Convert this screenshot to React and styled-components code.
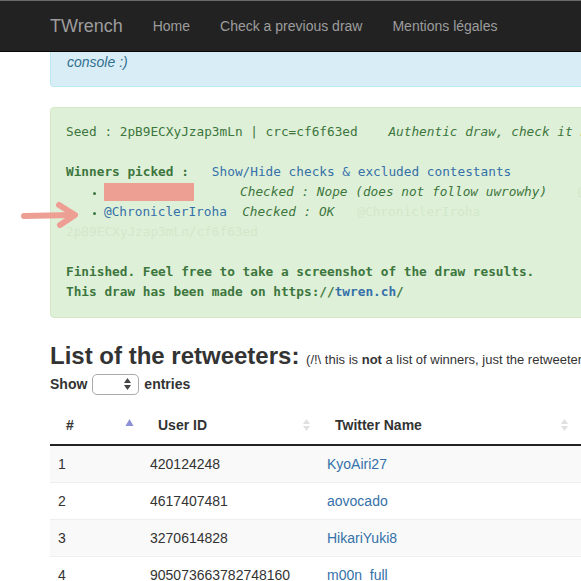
import styled, { createGlobalStyle } from "styled-components";

const GlobalStyle = createGlobalStyle`
  html, body {
    margin: 0;
    padding: 0;
    overflow: hidden;
    background: #fff;
  }
  body {
    font-family: "Liberation Sans", Arial, sans-serif;
    font-size: 14px;
    line-height: 20px;
    color: #333;
  }
`;

const colors = {
  navBg: "#222",
  navText: "#9d9d9d",
  infoBg: "#d9edf7",
  infoBorder: "#bce8f1",
  infoText: "#31708f",
  successBg: "#dff0d8",
  successBorder: "#d6e9c6",
  successText: "#3c763d",
  faint: "#d2e8ca",
  link: "#3571a8",
  marker: "#ee9f94",
};

const Page = styled.div`
  width: 1200px;
`;

const Navbar = styled.nav`
  background: ${colors.navBg};
  border-top: 1px solid #6a6a6a;
  border-bottom: 1px solid #080808;
  height: 50px;
`;

const NavInner = styled.div`
  display: flex;
  align-items: center;
  height: 100%;
  padding-left: 50px;
`;

const Brand = styled.a`
  font-size: 18px;
  color: ${colors.navText};
  padding-right: 15px;
  line-height: 20px;
`;

const NavLink = styled.a`
  font-size: 14px;
  color: ${colors.navText};
  padding: 0 15px;
  line-height: 20px;
`;

const Container = styled.div`
  width: 1140px;
  margin-left: 50px;
`;

const InfoAlert = styled.div`
  background: ${colors.infoBg};
  border: 1px solid ${colors.infoBorder};
  border-top: none;
  border-radius: 0 0 4px 4px;
  color: ${colors.infoText};
  font-style: italic;
  padding: 0 16px 14px;
  line-height: 20px;
`;

const SuccessAlert = styled.div`
  position: relative;
  margin-top: 20px;
  background: ${colors.successBg};
  border: 1px solid ${colors.successBorder};
  border-radius: 4px;
  color: ${colors.successText};
  padding: 14px 15px 15px;
  font-family: "DejaVu Sans Mono", Menlo, monospace;
  font-size: 12.75px;
  line-height: 20px;
  white-space: pre;
`;

const Line = styled.div`
  height: 20px;
  font-weight: ${(p) => (p.$bold ? "bold" : "normal")};
`;

const Italic = styled.span`
  font-style: italic;
`;

const Link = styled.a`
  color: ${colors.link};
  font-weight: ${(p) => (p.$bold ? "bold" : "normal")};
`;

const Faint = styled.span`
  color: ${colors.faint};
`;

const WinnerList = styled.ul`
  margin: 0;
  padding: 0 0 0 38px;
  list-style: none;
`;

const Winner = styled.li`
  position: relative;
  height: 20px;

  &::before {
    content: "";
    position: absolute;
    left: -11px;
    top: 10px;
    width: 3px;
    height: 3px;
    border-radius: 50%;
    background: ${colors.successText};
  }
`;

const Redacted = styled.span`
  display: inline-block;
  vertical-align: -5px;
  width: 90px;
  height: 18px;
  background: ${colors.marker};
`;

const Arrow = styled.svg`
  position: absolute;
  left: -30px;
  top: 87px;
`;

const Heading = styled.h2`
  margin: 23px 0 0;
  height: 30px;
  font-size: 24px;
  font-weight: bold;
  line-height: 30px;
  color: #333;
  white-space: nowrap;

  small {
    font-size: 13px;
    line-height: 20px;
    font-weight: normal;
    color: #333;
  }
`;

const LengthRow = styled.div`
  display: flex;
  align-items: center;
  gap: 5px;
  margin-top: 2px;
  height: 22px;
  font-weight: bold;
`;

const Select = styled.span`
  display: inline-flex;
  align-items: center;
  justify-content: flex-end;
  box-sizing: border-box;
  width: 47px;
  height: 21px;
  border: 1px solid #aaa;
  border-radius: 5px;
  padding-right: 6px;
  background: #fff;
`;

const Table = styled.table`
  margin-top: 11px;
  width: 1140px;
  border-collapse: collapse;
`;

const Th = styled.th`
  width: ${(p) => p.$w}px;
  text-align: left;
  padding: 8px 8px 8px 16px;
  border-bottom: 2px solid #222;
  font-weight: bold;
  height: 22px;
`;

const ThInner = styled.div`
  display: flex;
  align-items: center;
  justify-content: space-between;
`;

const Row = styled.tr`
  background: ${(p) => (p.$striped ? "#f9f9f9" : "#fff")};
`;

const Td = styled.td`
  padding: 8px;
  border-top: 1px solid #eee;
  line-height: 20px;
`;

const SortIcon = ({ state }) =>
  state === "asc" ? (
    <svg width="9" height="14" viewBox="0 0 9 14">
      <path d="M4.5 1 L8.5 8 L0.5 8 Z" fill="#8d8fd6" />
    </svg>
  ) : (
    <svg width="9" height="14" viewBox="0 0 9 14">
      <path d="M4.5 1 L8 6 L1 6 Z" fill={state === "select" ? "#444" : "#e0e0e0"} />
      <path d="M4.5 13 L8 8 L1 8 Z" fill={state === "select" ? "#444" : "#e0e0e0"} />
    </svg>
  );

const rows = [
  ["1", "420124248", "KyoAiri27"],
  ["2", "4617407481", "aovocado"],
  ["3", "3270614828", "HikariYuki8"],
  ["4", "905073663782748160", "m00n_full"],
];

export default function App() {
  return (
    <Page>
      <GlobalStyle />
      <Navbar>
        <NavInner>
          <Brand>TWrench</Brand>
          <NavLink>Home</NavLink>
          <NavLink>Check a previous draw</NavLink>
          <NavLink>Mentions légales</NavLink>
        </NavInner>
      </Navbar>
      <Container>
        <InfoAlert>console :)</InfoAlert>

        <SuccessAlert>
          <Arrow width="70" height="40" viewBox="0 0 70 40">
            <path
              d="M3 21 L52 20"
              stroke={colors.marker}
              strokeWidth="6"
              strokeLinecap="round"
              fill="none"
            />
            <path
              d="M38 10 L54 20 L39 30"
              stroke={colors.marker}
              strokeWidth="6"
              strokeLinecap="round"
              strokeLinejoin="round"
              fill="none"
            />
          </Arrow>
          <Line>
            {"Seed : 2pB9ECXyJzap3mLn | crc=cf6f63ed    "}
            <Italic>Authentic draw, check it here : https://twren.ch/check</Italic>
          </Line>
          <Line />
          <Line $bold>
            {"Winners picked :   "}
            <Link>Show/Hide checks &amp; excluded contestants</Link>
          </Line>
          <WinnerList>
            <Winner>
              <Redacted />
              {"      "}
              <Italic>Checked : Nope (does not follow uwrowhy)</Italic>
              {"    "}
              <Faint>@xxxxxxxxxx</Faint>
            </Winner>
            <Winner>
              <Link>@ChroniclerIroha</Link>
              {"  "}
              <Italic>Checked : OK</Italic>
              {"   "}
              <Faint>@ChroniclerIroha</Faint>
            </Winner>
          </WinnerList>
          <Line>
            <Faint>2pB9ECXyJzap3mLn/cf6f63ed</Faint>
          </Line>
          <Line />
          <Line $bold>Finished. Feel free to take a screenshot of the draw results.</Line>
          <Line $bold>
            This draw has been made on https://<Link $bold>twren.ch</Link>/
          </Line>
        </SuccessAlert>

        <Heading>
          List of the retweeters: <small>(/!\ this is <b>not</b> a list of winners, just the retweeters of the tweet)</small>
        </Heading>
        <LengthRow>
          Show
          <Select>
            <SortIcon state="select" />
          </Select>
          entries
        </LengthRow>

        <Table>
          <thead>
            <tr>
              <Th $w={68}>
                <ThInner>
                  #
                  <SortIcon state="asc" />
                </ThInner>
              </Th>
              <Th $w={153}>
                <ThInner>
                  User ID
                  <SortIcon />
                </ThInner>
              </Th>
              <Th $w={234}>
                <ThInner>
                  Twitter Name
                  <SortIcon />
                </ThInner>
              </Th>
              <Th>
                <ThInner>Followers</ThInner>
              </Th>
            </tr>
          </thead>
          <tbody>
            {rows.map(([n, id, name], i) => (
              <Row key={n} $striped={i % 2 === 0}>
                <Td>{n}</Td>
                <Td>{id}</Td>
                <Td>
                  <Link>{name}</Link>
                </Td>
                <Td />
              </Row>
            ))}
          </tbody>
        </Table>
      </Container>
    </Page>
  );
}
